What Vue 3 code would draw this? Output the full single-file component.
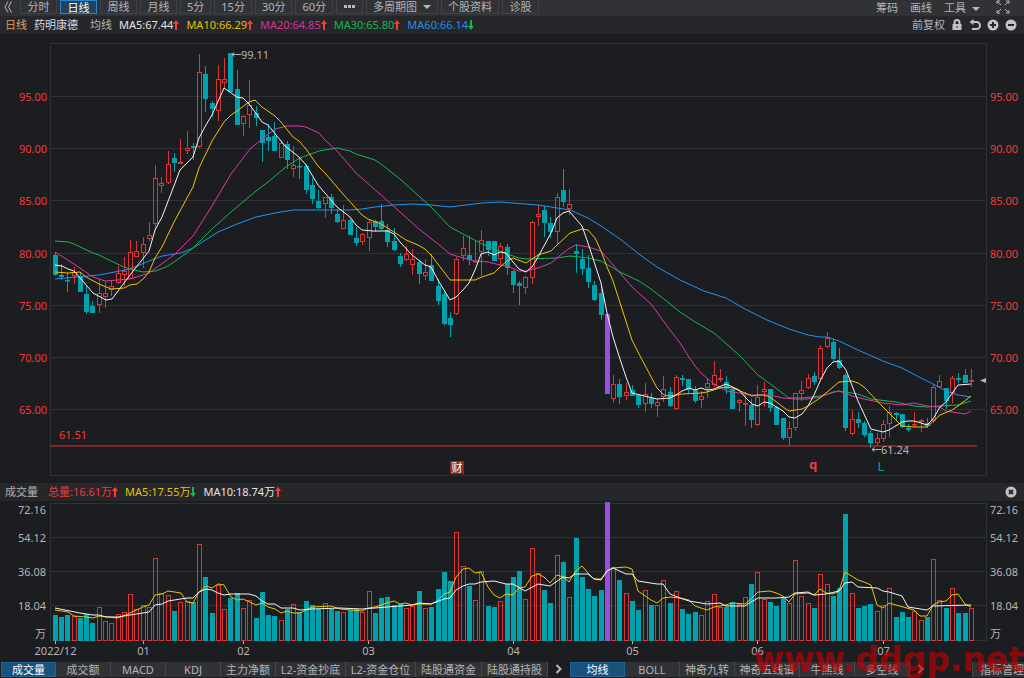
<script setup>
const PITCH = 6.274
const FIRST_X = 55.3

// kind, high, body top, body bottom, low, volume top
const raw = `g253,255,275,276,615 g264,275,277,280,617 g273,280,281,292,615 r267,272,276,284,616 g272,276,292,292,618
g286,294,312,314,614 g301,306,313,313,623 r279,293,305,313,607 r282,293,297,308,621 r281,286,290,296,623
r266,273,283,284,614 r257,271,275,286,612 r240,252,279,279,594 r241,251,257,257,609 r237,244,253,268,605
r222,235,239,241,607 r165,178,224,231,558 r177,183,186,193,593 r151,164,183,184,595 g153,158,163,172,611
r139,162,164,164,602 r131,148,151,154,601 g143,146,148,160,602 r54,72,147,148,544 g66,74,99,112,577
g101,103,109,117,613 r65,79,111,121,585 r58,79,83,88,609 g53,53,92,93,598 g70,89,125,125,593
r115,116,124,136,608 r80,105,115,128,600 g106,113,118,126,618 g130,130,143,162,592 g124,137,141,151,615
g122,136,151,151,616 r140,143,158,158,620 g141,144,160,169,609 r146,165,169,177,604 g157,166,167,179,612
g164,166,190,194,601 g178,185,199,204,605 g190,201,208,209,609 r197,197,204,218,603 g194,197,208,214,609
g209,214,222,223,611 r205,220,229,229,612 g219,220,235,235,610 g227,238,243,246,609 r233,234,242,245,612
r219,222,238,251,591 g220,221,227,232,613 g204,221,229,230,598 g224,230,242,247,597 g228,241,250,251,605
g253,256,264,267,604 r246,254,260,261,608 r249,259,265,275,606 g260,262,274,284,591 r259,272,276,280,608
g254,265,281,281,607 g279,286,301,305,589 g292,294,324,326,572 g312,318,325,337,581 r257,259,314,315,532
r236,248,256,261,566 g236,255,260,265,586 r241,261,262,263,600 r230,240,252,276,571 g241,241,250,256,606
g241,241,261,261,607 r243,246,259,267,601 g244,247,268,275,584 g270,271,285,293,577 g281,283,286,305,571
r276,277,288,294,599 r221,222,278,284,548 r205,214,217,226,573 g206,210,223,237,590 g217,223,232,238,603
r193,197,232,245,555 g169,190,202,207,562 r189,204,209,215,597 g244,251,254,273,538 g249,259,269,275,577
g255,268,282,288,589 g281,285,300,301,596 g285,293,315,320,590 p314,314,394,394,502 r375,384,399,403,567
g379,384,397,404,580 r383,392,396,400,593 g385,390,396,396,601 g394,395,405,408,610 r383,394,404,412,590
g393,398,404,408,605 r399,402,406,417,605 r376,389,397,402,580 g387,392,406,407,603 r375,377,409,410,591
g375,378,380,386,609 g379,379,390,393,614 g386,390,401,403,612 r391,396,400,408,615 r379,383,388,398,601
r361,375,385,387,594 r369,378,380,382,607 g376,382,389,394,607 g389,389,409,409,602 r399,400,403,412,604
r392,403,405,426,597 g399,405,420,428,584 r385,397,425,426,572 r382,389,392,407,599 g389,389,408,412,602
g406,407,425,425,606 g418,418,438,440,597 r421,428,438,446,603 r393,393,428,431,560 r381,390,394,401,596
r374,378,388,389,603 g372,376,382,385,608 r345,348,379,379,574 r332,338,347,348,584 g339,342,359,361,596
g348,360,368,369,588 g373,375,428,431,514 r410,419,434,435,593 g412,419,423,428,608 g421,423,435,437,606
g430,433,443,448,604 r433,438,443,446,611 r420,424,439,442,605 r406,412,424,437,588 g412,413,415,420,617
g414,414,427,428,612 g424,428,430,432,617 r412,424,425,427,611 r419,420,422,432,620 g418,423,426,428,617
r385,387,421,423,559 r375,381,387,388,600 g388,388,401,409,608 r376,378,393,403,588 g373,378,380,383,613
g369,375,383,383,613 r369,380,382,387,608`

const bars = raw.split(/\s+/).map((s, i) => {
  const [high, top, bottom, low, vol] = s.slice(1).split(',').map(Number)
  return { kind: s[0], x: Math.floor(FIRST_X + i * PITCH) + 0.5, high, top, bottom, low, vol }
})

const priceLines = [
  { cls: 'blue', pts: '55,279 99,275 130,269 149,261 162,256 181,253 193,248 218,232 237,224 256,217 275,213 293,210 350,210 362,209 375,207 394,205 413,204 431,205 450,207 482,203 500,202 538,205 570,210 588,218 601,226 620,239 639,254 657,267 680,280 704,291 726,298 745,309 767,320 789,329 808,335 820,337 827,337 839,341 858,350 883,361 902,368 921,378 933,384 946,391 958,395 971,397' },
  { cls: 'green', pts: '55,241 68,242 74,244 93,253 99,255 111,261 124,267 130,269 143,272 156,271 168,266 181,257 193,248 212,229 231,212 237,207 256,191 268,182 287,166 300,158 319,151 337,148 350,151 356,154 375,160 381,164 400,179 431,207 450,227 463,234 482,244 507,254 519,258 526,259 557,258 570,256 588,258 601,261 620,272 639,281 651,289 664,299 680,312 692,320 714,333 739,355 758,375 777,389 789,398 802,398 820,396 839,391 858,394 871,399 896,402 914,406 927,407 940,406 958,405 971,401' },
  { cls: 'magenta', pts: '55,252 74,264 93,277 105,281 130,279 143,275 149,273 174,255 193,236 212,206 231,174 250,149 262,139 275,129 287,126 300,126 306,127 319,133 325,140 337,151 356,173 381,195 400,212 419,229 438,244 450,254 463,258 475,261 488,262 500,265 507,266 519,271 526,271 538,268 551,263 563,253 570,248 576,245 588,247 601,251 607,258 620,273 632,287 651,304 670,330 680,343 689,357 695,366 701,373 714,384 726,391 739,393 752,395 770,395 783,398 795,399 808,399 820,397 833,392 839,391 852,396 864,399 883,403 902,405 914,403 927,406 940,407 946,411 965,414 971,411' },
  { cls: 'yellow', pts: '55,272 68,273 80,272 86,277 99,284 111,289 124,288 130,285 137,284 143,279 149,272 155,258 162,247 174,222 187,198 193,187 199,168 212,141 224,122 231,115 237,111 249,102 255,100 262,107 275,116 281,122 293,137 299,141 306,149 318,166 325,173 343,194 362,215 368,219 381,224 394,232 406,240 418,245 425,249 431,255 444,272 450,280 475,280 482,277 494,273 500,267 507,261 513,258 526,263 538,255 551,251 557,245 570,233 582,229 588,230 595,238 601,251 607,267 613,281 632,340 639,354 657,388 664,395 670,396 682,394 701,393 707,392 720,388 726,387 733,388 745,393 752,396 758,395 764,395 770,397 783,407 789,411 802,409 808,406 820,398 839,382 852,381 858,383 864,387 883,407 902,426 914,427 927,427 940,415 952,410 958,406 971,396' },
  { cls: 'white', pts: '55,265 62,266 68,269 74,271 81,279 93,293 106,300 112,299 130,275 149,251 155,230 162,217 180,170 193,157 199,138 206,125 212,115 224,88 237,97 243,98 249,104 255,112 262,122 268,125 285,146 299,157 306,165 318,185 331,200 337,207 350,217 356,225 362,230 373,231 388,231 394,234 400,242 412,255 425,265 431,267 438,280 444,290 450,300 456,297 463,290 469,283 475,270 481,254 488,252 494,255 500,252 506,253 513,262 519,269 526,272 532,267 538,257 551,233 557,218 563,213 569,211 582,226 588,243 601,283 607,313 613,337 620,359 626,377 632,393 657,399 670,398 676,395 682,391 689,388 695,390 701,388 707,390 714,389 726,384 739,390 745,397 752,404 758,406 764,402 770,403 783,411 789,417 795,418 802,414 808,406 814,395 821,379 827,368 833,362 839,361 846,370 858,401 871,429 883,432 889,430 902,422 908,421 914,421 921,423 927,425 933,419 940,407 946,402 958,385 971,384' }
]

const volumeLines = [
  { cls: 'yellow', pts: '55,610 68,612 74,616 86,617 93,618 99,616 118,618 130,613 143,607 149,605 155,595 162,594 168,591 181,593 187,602 193,603 199,592 206,586 212,588 218,584 224,585 231,597 237,600 243,599 256,605 262,603 268,607 275,609 281,613 287,611 293,613 300,613 312,607 331,606 340,609 362,611 368,608 375,607 387,603 394,601 400,604 406,603 412,605 419,604 431,604 437,601 444,594 450,592 456,577 463,569 469,568 475,573 481,572 488,587 494,595 500,598 506,594 513,595 519,588 525,587 532,576 538,574 544,577 550,583 557,575 563,577 569,582 575,572 582,566 588,573 594,579 601,579 607,571 613,568 626,567 632,569 638,591 651,600 657,603 663,598 670,597 680,598 689,600 695,606 707,610 714,607 726,605 732,603 745,604 751,599 758,592 770,591 776,593 783,596 789,602 795,594 808,593 814,595 820,589 826,593 833,594 839,591 845,572 858,580 864,582 871,585 877,605 883,608 889,603 896,605 914,610 920,616 927,616 933,605 939,602 946,601 952,595 958,594 965,604 971,607' },
  { cls: 'white', pts: '55,608 80,613 93,615 99,615 106,617 118,617 130,615 149,612 155,605 162,604 168,601 187,598 193,598 199,592 206,589 212,590 218,593 224,595 231,594 249,594 256,596 262,601 268,604 275,604 281,608 293,608 300,610 312,609 340,608 362,609 412,605 419,603 431,604 444,599 450,598 456,590 463,586 469,584 475,584 481,582 494,581 506,584 513,584 525,591 538,584 550,586 563,577 569,578 575,574 588,574 594,579 601,580 607,571 613,568 626,574 632,574 638,581 657,584 663,584 670,594 680,598 689,601 707,604 720,603 726,606 745,606 751,602 758,598 776,598 789,597 795,593 808,592 814,595 826,594 839,591 845,583 852,582 858,587 877,588 883,591 889,592 902,596 908,607 927,610 933,606 971,605' }
]

const priceAxis = [
  ['95.00', 96.5], ['90.00', 148.5], ['85.00', 200.5], ['80.00', 253.5],
  ['75.00', 305.5], ['70.00', 357.5], ['65.00', 409.5]
]
const volAxis = [['72.16', 510], ['54.12', 537.5], ['36.08', 571.5], ['18.04', 605.5], ['万', 633.5]]
const months = [['2022/12', 55.5], ['01', 143.5], ['02', 243.5], ['03', 368.5], ['04', 513.5], ['05', 632.5], ['06', 757.5], ['07', 883.5]]

const periods = ['分时', '日线', '周线', '月线', '5分', '15分', '30分', '60分']
const averages = [
  ['MA5:67.44', 'white', 'up'], ['MA10:66.29', 'yellow', 'up'], ['MA20:64.85', 'magenta', 'up'],
  ['MA30:65.80', 'green', 'up'], ['MA60:66.14', 'blue', 'down']
]
const volumes = [['总量:16.61万', 'red', 'up'], ['MA5:17.55万', 'yellow', 'down'], ['MA10:18.74万', 'white', 'up']]
const leftTabs = ['成交量', '成交额', 'MACD', 'KDJ', '主力净额', 'L2-资金抄底', 'L2-资金仓位', '陆股通资金', '陆股通持股']
const rightTabs = ['均线', 'BOLL', '神奇九转', '神奇五线谱', '牛熊线', '多空线']
</script>

<template>
  <main class="terminal">
    <nav class="toolbar">
      <button class="bare collapse" aria-label="收起">
        <svg width="8" height="12" viewBox="0 0 8 12"><path d="M4 0.5L1 6l3 5.5M7.5 0.5L4.5 6l3 5.5" /></svg>
      </button>
      <button v-for="p in periods" :key="p" class="period" :class="{ active: p === '日线', short: p === '5分' }">{{ p }}</button>
      <button class="period dots" aria-label="更多周期"><i></i><i></i><i></i></button>
      <button class="period">多周期图<span class="caret"></span></button>
      <button class="period">个股资料</button>
      <button class="period">诊股</button>
      <div class="tools">
        <button class="bare">筹码</button>
        <button class="bare">画线</button>
        <button class="bare">工具<span class="caret"></span></button>
        <button class="bare full" aria-label="全屏">
          <svg width="14" height="14" viewBox="0 0 14 14"><path d="M1 4V1h3M1 1l4 4M10 1h3v3M13 1L9 5M1 10v3h3M1 13l4-4M13 10v3h-3M13 13L9 9" /></svg>
        </button>
      </div>
    </nav>

    <header class="info">
      <span class="orange">日线</span>
      <span class="name">药明康德</span>
      <span class="label">均线</span>
      <span v-for="[t, c, d] in averages" :key="t" class="stat" :class="c">{{ t }}<svg class="arrow" :class="d" width="6" height="10" viewBox="0 0 6 10"><path d="M3 0l3 4H4v6H2V4H0z" /></svg></span>
      <div class="actions">
        <button class="bare">前复权</button>
        <button class="bare" aria-label="锁定">
          <svg width="12" height="12" viewBox="0 0 12 12"><path d="M3.5 5V3.5a2.5 2.5 0 0 1 5 0V5" class="line" /><path d="M1.5 5h9v6h-9z" /><path d="M5.5 7h1v2h-1z" class="hole" /></svg>
        </button>
        <button class="bare" aria-label="撤销">
          <svg width="12" height="12" viewBox="0 0 12 12"><path d="M3 3h4.5a3.2 3.2 0 0 1 0 7H3" class="line" /><path d="M0.5 3L4.5 0v6z" /></svg>
        </button>
        <button class="bare" aria-label="放大">
          <svg width="12" height="12" viewBox="0 0 12 12"><circle cx="6" cy="6" r="5.5" /><path d="M6 3v6M3 6h6" class="cut" /></svg>
        </button>
        <button class="bare" aria-label="缩小">
          <svg width="12" height="12" viewBox="0 0 12 12"><circle cx="6" cy="6" r="5.5" /><path d="M3 6h6" class="cut" /></svg>
        </button>
      </div>
    </header>

    <svg class="chart" viewBox="0 34 1024 449" role="img" aria-label="日线走势">
      <g class="grid">
        <path d="M50.5 43.5H986.5V475.5H50.5z" />
        <path v-for="[t, y] in priceAxis" :key="t" :d="`M50.5 ${y}H986.5`" />
      </g>
      <g class="axis red">
        <template v-for="[t, y] in priceAxis" :key="t">
          <text x="47" :y="y + 4" text-anchor="end">{{ t }}</text>
          <text x="990" :y="y + 4">{{ t }}</text>
        </template>
        <text x="59" y="439">61.51</text>
      </g>
      <path class="support" d="M50.5 446H977" />
      <g v-for="(b, i) in bars" :key="i" :class="'bar-' + b.kind">
        <path :d="`M${b.x} ${b.high}V${b.top}M${b.x} ${b.bottom}V${b.low}`" />
        <rect :x="b.x - 2" :y="b.top + 0.5" width="4" :height="Math.max(b.bottom - b.top - 1, 0.5)" />
      </g>
      <polyline v-for="l in priceLines" :key="l.cls" :class="['ma', l.cls]" :points="l.pts" />
      <g class="note">
        <path d="M232 54.5H241M234.5 52.5L232 54.5l2.5 2M872 449.5H881M874.5 447.5L872 449.5l2.5 2" />
        <text x="241" y="59">99.11</text>
        <text x="881" y="454">61.24</text>
      </g>
      <path class="pointer" d="M980 380.5l6-2.5v5z" />
      <rect class="report" x="450" y="461" width="14" height="13" />
      <text class="report-text" x="457" y="472" text-anchor="middle">财</text>
      <text class="mark red" x="813" y="469" text-anchor="middle">q</text>
      <text class="mark teal" x="881" y="471" text-anchor="middle">L</text>
    </svg>

    <header class="info">
      <span class="label vol">成交量</span>
      <span v-for="[t, c, d] in volumes" :key="t" class="stat" :class="c">{{ t }}<svg class="arrow" :class="d" width="6" height="10" viewBox="0 0 6 10"><path d="M3 0l3 4H4v6H2V4H0z" /></svg></span>
      <div class="actions">
        <button class="bare" aria-label="关闭">
          <svg width="12" height="12" viewBox="0 0 12 12"><circle cx="6" cy="6" r="5.5" /><path d="M4 4l4 4M8 4l-4 4" class="cut" /></svg>
        </button>
      </div>
    </header>

    <svg class="chart" viewBox="0 501 1024 160" role="img" aria-label="成交量">
      <g class="grid">
        <path d="M50.5 503.5H986.5V640.5H50.5zM50.5 537.5H986.5M50.5 571.5H986.5M50.5 605.5H986.5" />
      </g>
      <g class="axis">
        <template v-for="[t, y] in volAxis" :key="t">
          <text x="46" :y="y + 4" text-anchor="end">{{ t }}</text>
          <text x="990" :y="y + 4">{{ t }}</text>
        </template>
        <template v-for="[t, x] in months" :key="t">
          <path class="tick" :d="`M${x} 641v3`" />
          <text :x="x" y="655" text-anchor="middle">{{ t }}</text>
        </template>
      </g>
      <g v-for="(b, i) in bars" :key="i" :class="'bar-' + b.kind">
        <rect :x="b.x - 2" :y="b.vol + 0.5" width="4" :height="640 - b.vol" />
      </g>
      <polyline v-for="l in volumeLines" :key="l.cls" :class="['ma', l.cls]" :points="l.pts" />
    </svg>

    <footer class="tabs">
      <div class="group left">
        <button v-for="t in leftTabs" :key="t" :class="{ on: t === '成交量', long: t.length > 4 }">{{ t }}</button>
      </div>
      <button class="bare next" aria-label="更多指标">
        <svg width="8" height="10" viewBox="0 0 8 10"><path d="M1.5 1l4 4-4 4" /></svg>
      </button>
      <div class="group">
        <button v-for="t in rightTabs" :key="t" :class="{ on: t === '均线', wide: t.length > 4 }">{{ t }}</button>
      </div>
      <button class="bare next" aria-label="更多主图指标">
        <svg width="8" height="10" viewBox="0 0 8 10"><path d="M1.5 1l4 4-4 4" /></svg>
      </button>
      <button class="manage">指标管理</button>
    </footer>
    <div class="watermark">www.ddgp.net</div>
  </main>
</template>

<style>
body {
  background: #1c1d21;
}
</style>

<style scoped>
.terminal {
  position: relative;
  overflow: hidden;
  background: #1c1d21;
  color: #b4b4b6;
  font: 11px/16px "Noto Sans", "Noto Sans CJK SC", sans-serif;
}
button {
  margin: 0;
  padding: 0;
  border: 0;
  background: none;
  color: inherit;
  font: inherit;
  white-space: nowrap;
}
.toolbar {
  display: flex;
  align-items: flex-start;
  gap: 3px;
  height: 16px;
  padding: 0 14px 0 4px;
  background: #313236;
}
.collapse {
  width: 13px;
  height: 13px;
  text-align: left;
}
.collapse svg,
.full svg,
.next svg {
  display: block;
  fill: none;
  stroke: #b9b9bb;
}
.period {
  display: flex;
  align-items: center;
  justify-content: center;
  min-width: 37px;
  height: 14px;
  padding: 0 6px;
  border: 1px solid #414246;
  border-top: 0;
  line-height: 13px;
}
.period.active {
  border: 1px solid #2a86c8;
  background: #22415a;
  color: #fff;
}
.period.short {
  min-width: 31px;
}
.period.dots {
  gap: 1px;
  min-width: 27px;
}
.dots i {
  width: 3px;
  height: 3px;
  background: #b9b9bb;
}
.caret {
  display: inline-block;
  margin-left: 6px;
  border: 4px solid transparent;
  border-top-color: #b9b9bb;
  border-bottom: 0;
  vertical-align: middle;
}
.tools {
  display: flex;
  gap: 12px;
  margin-left: auto;
  line-height: 13px;
}
.tools .full {
  margin-left: 4px;
}
.info {
  display: flex;
  align-items: center;
  height: 18px;
  padding: 0 7px 0 5px;
  background: #26272b;
  white-space: nowrap;
}
.name {
  margin: 0 12px 0 7px;
  color: #d8d8d8;
}
.label {
  margin-right: 7px;
}
.vol {
  margin-right: 10px;
}
.stat {
  display: flex;
  align-items: center;
  margin-right: 7px;
}
.arrow.up {
  fill: #ff3b30;
}
.arrow.down {
  fill: #12b84c;
  transform: rotate(180deg);
}
.actions {
  display: flex;
  align-items: center;
  gap: 6px;
  margin-left: auto;
}
.actions svg {
  display: block;
  fill: #c4c4c6;
}
.actions .line {
  fill: none;
  stroke: #c4c4c6;
  stroke-width: 2;
}
.actions .hole {
  fill: #26272b;
}
.actions .cut {
  fill: none;
  stroke: #26272b;
  stroke-width: 2;
}
.white { color: #e4e4e4; stroke: #f4f4f6; }
.yellow { color: #e6c000; stroke: #f0c400; }
.magenta { color: #d8309c; stroke: #e036a8; }
.green { color: #12b84c; stroke: #14b852; }
.blue { color: #1f90ea; stroke: #2094f4; }
.red { color: #f03a3a; }
.orange { color: #d9a066; }
.arrow { stroke: none; }
.chart {
  display: block;
  width: 100%;
  height: auto;
}
.chart text {
  fill: #b4b4b6;
  stroke: none;
}
.chart .red text,
.chart text.red {
  fill: #f03a3a;
}
.grid path {
  fill: none;
  stroke: #303136;
}
.tick {
  stroke: #b4b4b6;
}
.support {
  fill: none;
  stroke: #dc3535;
  stroke-width: 1;
}
.ma {
  fill: none;
  stroke-width: 1;
  stroke-linejoin: round;
}
.bar-r path,
.bar-r rect {
  fill: none;
  stroke: #dc3535;
}
.bar-g path,
.bar-g rect {
  fill: #00a2ad;
  stroke: #00a2ad;
}
.bar-p rect {
  fill: #9a4ce8;
  stroke: #9a4ce8;
}
.note path {
  fill: none;
  stroke: #b4b4b6;
}
.pointer {
  fill: #b4b4b6;
}
.report {
  fill: #8e2a2c;
}
.chart .report-text {
  fill: #fff;
}
.chart .mark {
  font-size: 13px;
  font-weight: 700;
}
.chart .teal {
  fill: #00a2ad;
  font-weight: 400;
}
.tabs {
  display: flex;
  height: 17px;
  padding-left: 1px;
  white-space: nowrap;
}
.group {
  display: flex;
  height: 15px;
  margin-top: 1px;
  background: #313236;
}
.group button {
  width: 55px;
  border-right: 1px solid #46474b;
  line-height: 15px;
}
.group .long {
  width: 66px;
}
.group .long:nth-child(6),
.group .long:nth-child(7) {
  width: 70px;
}
.group .wide {
  width: 65px;
}
.group .on {
  border: 1px solid #1d6596;
  background: #1b527c;
  color: #fff;
  line-height: 13px;
}
.next {
  display: flex;
  align-items: center;
  justify-content: center;
  width: 22px;
  height: 16px;
}
.next svg {
  stroke-width: 2;
}
.manage {
  height: 15px;
  margin: 1px 0 0 auto;
  padding: 0 0 0 7px;
  border-left: 1px solid #46474b;
  background: #313236;
  line-height: 15px;
}
.watermark {
  position: absolute;
  right: 0;
  bottom: 0;
  color: rgba(190, 0, 5, 0.68);
  font: 700 33px/36px "DejaVu Sans", sans-serif;
  pointer-events: none;
}
</style>
